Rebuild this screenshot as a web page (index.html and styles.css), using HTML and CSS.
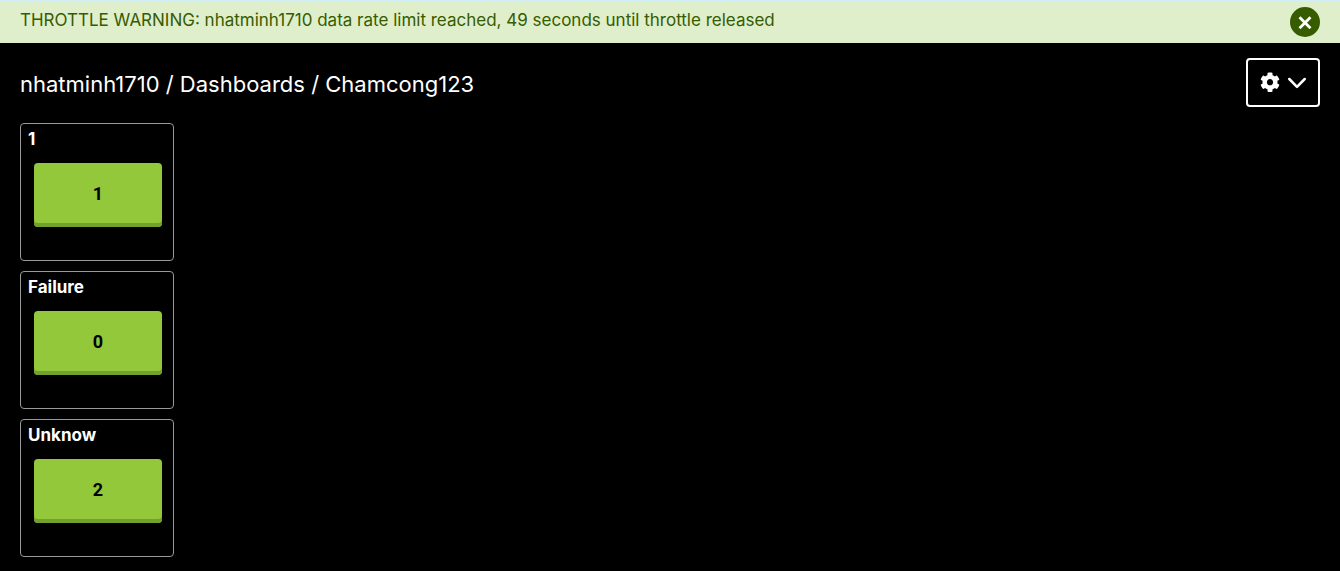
FILE: index.html
```html
<!DOCTYPE html>
<html lang="en">
<head>
<meta charset="utf-8">
<title>Chamcong123</title>
<link rel="stylesheet" href="styles.css">
</head>
<body>
<div class="banner" role="alert">
  <p class="banner-text">THROTTLE WARNING: nhatminh1710 data rate limit reached, 49 seconds until throttle released</p>
  <button class="close" type="button" aria-label="Close">
    <svg width="14" height="14" viewBox="0 0 14 14" fill="none" stroke="currentColor" stroke-width="2.800"><path d="M1.500 2.200l11 11M12.500 2.200l-11 11"/></svg>
  </button>
</div>
<header class="header">
  <nav class="crumbs"><a href="#">nhatminh1710</a> / <a href="#">Dashboards</a> / <span>Chamcong123</span></nav>
  <button class="settings" type="button" aria-label="Dashboard settings">
    <svg width="20" height="22" viewBox="0 -6 512 563" fill="currentColor"><path d="M487.4 315.7l-42.600-24.600c4.300-23.200 4.300-47 0-70.200l42.600-24.600c4.900-2.800 7.100-8.600 5.500-14-11.100-35.600-30-67.800-54.700-94.600-3.800-4.100-10-5.100-14.800-2.300L380.800 110c-17.900-15.400-38.500-27.300-60.800-35.100V25.800c0-5.600-3.900-10.500-9.400-11.700-36.700-8.200-74.300-7.800-109.200 0-5.500 1.200-9.400 6.100-9.400 11.700V75c-22.200 7.900-42.800 19.800-60.800 35.100L88.700 85.500c-4.900-2.800-11-1.900-14.800 2.300-24.700 26.700-43.600 58.900-54.700 94.600-1.700 5.400.6 11.200 5.500 14L67.300 221c-4.300 23.200-4.300 47 0 70.200l-42.600 24.600c-4.900 2.800-7.100 8.600-5.500 14 11.100 35.600 30 67.800 54.700 94.600 3.800 4.100 10 5.100 14.800 2.300l42.600-24.600c17.900 15.400 38.500 27.300 60.800 35.100v49.200c0 5.600 3.900 10.500 9.400 11.700 36.700 8.200 74.300 7.800 109.200 0 5.500-1.200 9.400-6.100 9.400-11.700v-49.200c22.200-7.900 42.800-19.800 60.800-35.100l42.600 24.600c4.900 2.800 11 1.900 14.800-2.300 24.700-26.700 43.600-58.900 54.700-94.600 1.500-5.500-.7-11.300-5.600-14.100zM256 336c-44.100 0-80-35.900-80-80s35.900-80 80-80 80 35.900 80 80-35.900 80-80 80z"/></svg>
    <svg width="18" height="20" viewBox="0 0 18 20" fill="none" stroke="currentColor" stroke-width="2.500" stroke-linecap="round" stroke-linejoin="round"><path d="M1.300 6L9 13.800 16.700 6"/></svg>
  </button>
</header>
<main class="board">
  <section class="tile">
    <h2 class="tile-title">1</h2>
    <button class="value" type="button">1</button>
  </section>
  <section class="tile">
    <h2 class="tile-title">Failure</h2>
    <button class="value" type="button">0</button>
  </section>
  <section class="tile">
    <h2 class="tile-title">Unknow</h2>
    <button class="value" type="button">2</button>
  </section>
</main>
</body>
</html>
```
FILE: styles.css
```css
* {
  box-sizing: border-box;
}

body {
  margin: 0;
  background: #000;
  color: #fff;
  font-family: Inter, "Liberation Sans", sans-serif;
}

button {
  padding: 0;
  border: 0;
  font: inherit;
  cursor: pointer;
}

.banner {
  display: flex;
  align-items: flex-start;
  justify-content: space-between;
  gap: 20px;
  padding: 6px 20px;
  border-top: 1px solid #d2eef6;
  background: #dfeecb;
  color: #365c00;
}

.banner-text {
  margin: 0;
  padding-top: 1px;
  font-size: 17px;
  line-height: 24px;
}

.close {
  display: flex;
  flex: none;
  align-items: center;
  justify-content: center;
  width: 30px;
  height: 30px;
  border-radius: 50%;
  background: #365c00;
  color: #fff;
}

.header {
  display: flex;
  align-items: center;
  justify-content: space-between;
  padding: 15px 20px 16px;
}

.crumbs {
  padding-top: 3px;
  font-size: 22px;
  line-height: 32px;
}

.crumbs a {
  color: inherit;
  text-decoration: none;
}

.settings {
  display: flex;
  align-items: center;
  justify-content: center;
  gap: 8px;
  width: 74px;
  height: 49px;
  border: 2px solid #fff;
  border-radius: 4px;
  background: #000;
  color: #fff;
}

.board {
  display: grid;
  grid-template-columns: repeat(auto-fill, 154px);
  gap: 10px;
  padding: 0 20px 14px;
}

.tile {
  grid-column: 1;
  height: 138px;
  padding: 5px 11px 0 13px;
  border: 1px solid #999;
  border-radius: 4px;
}

.tile-title {
  margin: 0 0 14px -6px;
  font-size: 17px;
  line-height: 20px;
  font-weight: 700;
}

.value {
  display: block;
  width: 100%;
  height: 64px;
  padding-bottom: 4px;
  border-radius: 4px;
  background: #92c83a;
  box-shadow: inset 0 -4px #74a02e;
  color: #000;
  font-family: Roboto, "Liberation Sans", sans-serif;
  font-size: 18px;
  font-weight: 700;
}
```
